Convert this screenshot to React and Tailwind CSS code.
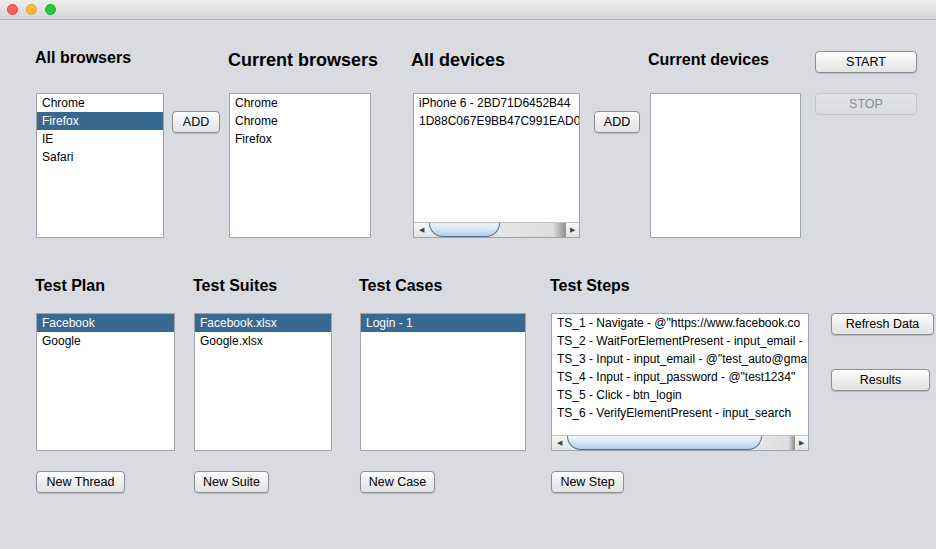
import React from 'react';

const Button = ({ label, className = '', disabled = false }) => (
  <div
    className={`flex items-center justify-center rounded-[4px] border text-[12.5px] leading-none ${
      disabled
        ? 'border-[#c4c6cb] bg-linear-to-b from-[#e2e3e7] to-[#d9dbe0] text-[#8b8c90]'
        : 'border-[#8c8e93] bg-linear-to-b from-[#ffffff] via-[#eeeeee] to-[#e4e4e4] text-black shadow-[0_1px_1px_rgba(0,0,0,0.15)]'
    } ${className}`}
  >
    {label}
  </div>
);

const Scrollbar = ({ thumb, track }) => (
  <div className="flex h-[15px] shrink-0 items-stretch border-t border-[#bfc1c5] bg-linear-to-b from-[#f7f7f7] to-[#e3e3e3]">
    <div className="flex w-[15px] items-center justify-center text-[7px] text-[#444]">◀</div>
    <div className={`flex ${track}`}>
      <div
        className={`${thumb} rounded-b-full rounded-t-[2px] border-x border-b border-[#4c6f95] bg-linear-to-b from-[#eef5fc] via-[#d6e5f4] to-[#b5cde6]`}
      />
      <div className="flex-1 bg-linear-to-r from-[#e6e6e6] via-[#dedede] via-80% to-[#8d8d8d]" />
    </div>
    <div className="flex flex-1 items-center justify-center text-[7px] text-[#444]">▶</div>
  </div>
);

const ListBox = ({ items, selected, className, scroll }) => (
  <div className={`flex flex-col overflow-hidden border border-[#a2a5ab] bg-white ${className}`}>
    <div className="flex-1 overflow-hidden">
      {items.map((item, i) => (
        <div
          key={i}
          className={`flex h-[18px] items-center whitespace-nowrap px-[5px] text-[12px] ${
            i === selected ? 'bg-[#386990] text-white' : 'text-black'
          }`}
        >
          {item}
        </div>
      ))}
    </div>
    {scroll}
  </div>
);

export default function App() {
  return (
    <div className="h-screen w-full overflow-hidden bg-[#d9dbe0] font-['Liberation_Sans',Arial,sans-serif] text-black">
      {/* title bar */}
      <div className="flex h-[20px] items-center gap-[8px] border-b border-[#b9babd] bg-linear-to-b from-[#ececec] to-[#d6d6d6] pl-[7px]">
        <div className="h-[11px] w-[11px] rounded-full border border-[#e2463f] bg-[#fc5f57]" />
        <div className="h-[11px] w-[11px] rounded-full border border-[#dfa023] bg-[#fdbc2e]" />
        <div className="h-[11px] w-[11px] rounded-full border border-[#1da836] bg-[#29c840]" />
      </div>

      {/* browsers & devices */}
      <div className="flex items-start pl-[36px]">
        <div className="w-[128px]">
          <div className="-ml-[1px] h-[73px] whitespace-nowrap pt-[30px] text-[16px] font-bold leading-none">All browsers</div>
          <ListBox className="h-[145px]" items={['Chrome', 'Firefox', 'IE', 'Safari']} selected={1} />
        </div>
        <Button label="ADD" className="ml-[8px] mt-[91px] h-[22px] w-[48px]" />
        <div className="ml-[9px] w-[142px]">
          <div className="-ml-[1px] h-[73px] whitespace-nowrap pt-[31px] text-[18px] font-bold leading-none">Current browsers</div>
          <ListBox className="h-[145px]" items={['Chrome', 'Chrome', 'Firefox']} />
        </div>
        <div className="ml-[42px] w-[167px]">
          <div className="-ml-[2px] h-[73px] whitespace-nowrap pt-[31px] text-[18px] font-bold leading-none">All devices</div>
          <ListBox
            className="h-[145px]"
            items={['iPhone 6 - 2BD71D6452B44', '1D88C067E9BB47C991EAD0']}
            scroll={<Scrollbar thumb="w-[71px]" track="w-[137px]" />}
          />
        </div>
        <Button label="ADD" className="ml-[14px] mt-[91px] h-[22px] w-[46px]" />
        <div className="ml-[10px] w-[151px]">
          <div className="-ml-[2px] h-[73px] whitespace-nowrap pt-[32px] text-[16px] font-bold leading-none">Current devices</div>
          <ListBox className="h-[145px]" items={[]} />
        </div>
        <div className="ml-[14px] flex w-[102px] flex-col">
          <Button label="START" className="mt-[31px] h-[22px] w-full" />
          <Button label="STOP" disabled className="mt-[20px] h-[22px] w-full" />
        </div>
      </div>

      {/* tests */}
      <div className="flex items-start pl-[36px]">
        <div className="w-[139px]">
          <div className="-ml-[1px] h-[75px] whitespace-nowrap pt-[40px] text-[16px] font-bold leading-none">Test Plan</div>
          <ListBox className="h-[138px]" items={['Facebook', 'Google']} selected={0} />
          <Button label="New Thread" className="mt-[20px] h-[22px] w-[89px]" />
        </div>
        <div className="ml-[19px] w-[138px]">
          <div className="-ml-[1px] h-[75px] whitespace-nowrap pt-[40px] text-[16px] font-bold leading-none">Test Suites</div>
          <ListBox className="h-[138px]" items={['Facebook.xlsx', 'Google.xlsx']} selected={0} />
          <Button label="New Suite" className="mt-[20px] h-[22px] w-[75px]" />
        </div>
        <div className="ml-[28px] w-[166px]">
          <div className="-ml-[1px] h-[75px] whitespace-nowrap pt-[40px] text-[16px] font-bold leading-none">Test Cases</div>
          <ListBox className="h-[138px]" items={['Login - 1']} selected={0} />
          <Button label="New Case" className="mt-[20px] h-[22px] w-[75px]" />
        </div>
        <div className="ml-[25px] w-[258px]">
          <div className="-ml-[1px] h-[75px] whitespace-nowrap pt-[40px] text-[16px] font-bold leading-none">Test Steps</div>
          <ListBox
            className="h-[138px]"
            items={[
              'TS_1 - Navigate - @"https://www.facebook.co',
              'TS_2 - WaitForElementPresent - input_email -',
              'TS_3 - Input - input_email - @"test_auto@gma',
              'TS_4 - Input - input_password - @"test1234"',
              'TS_5 - Click - btn_login',
              'TS_6 - VerifyElementPresent - input_search',
            ]}
            scroll={<Scrollbar thumb="w-[195px]" track="w-[228px]" />}
          />
          <Button label="New Step" className="mt-[20px] h-[22px] w-[73px]" />
        </div>
        <div className="ml-[22px] flex flex-col">
          <Button label="Refresh Data" className="mt-[75px] h-[22px] w-[103px]" />
          <Button label="Results" className="mt-[34px] h-[22px] w-[99px]" />
        </div>
      </div>
    </div>
  );
}
